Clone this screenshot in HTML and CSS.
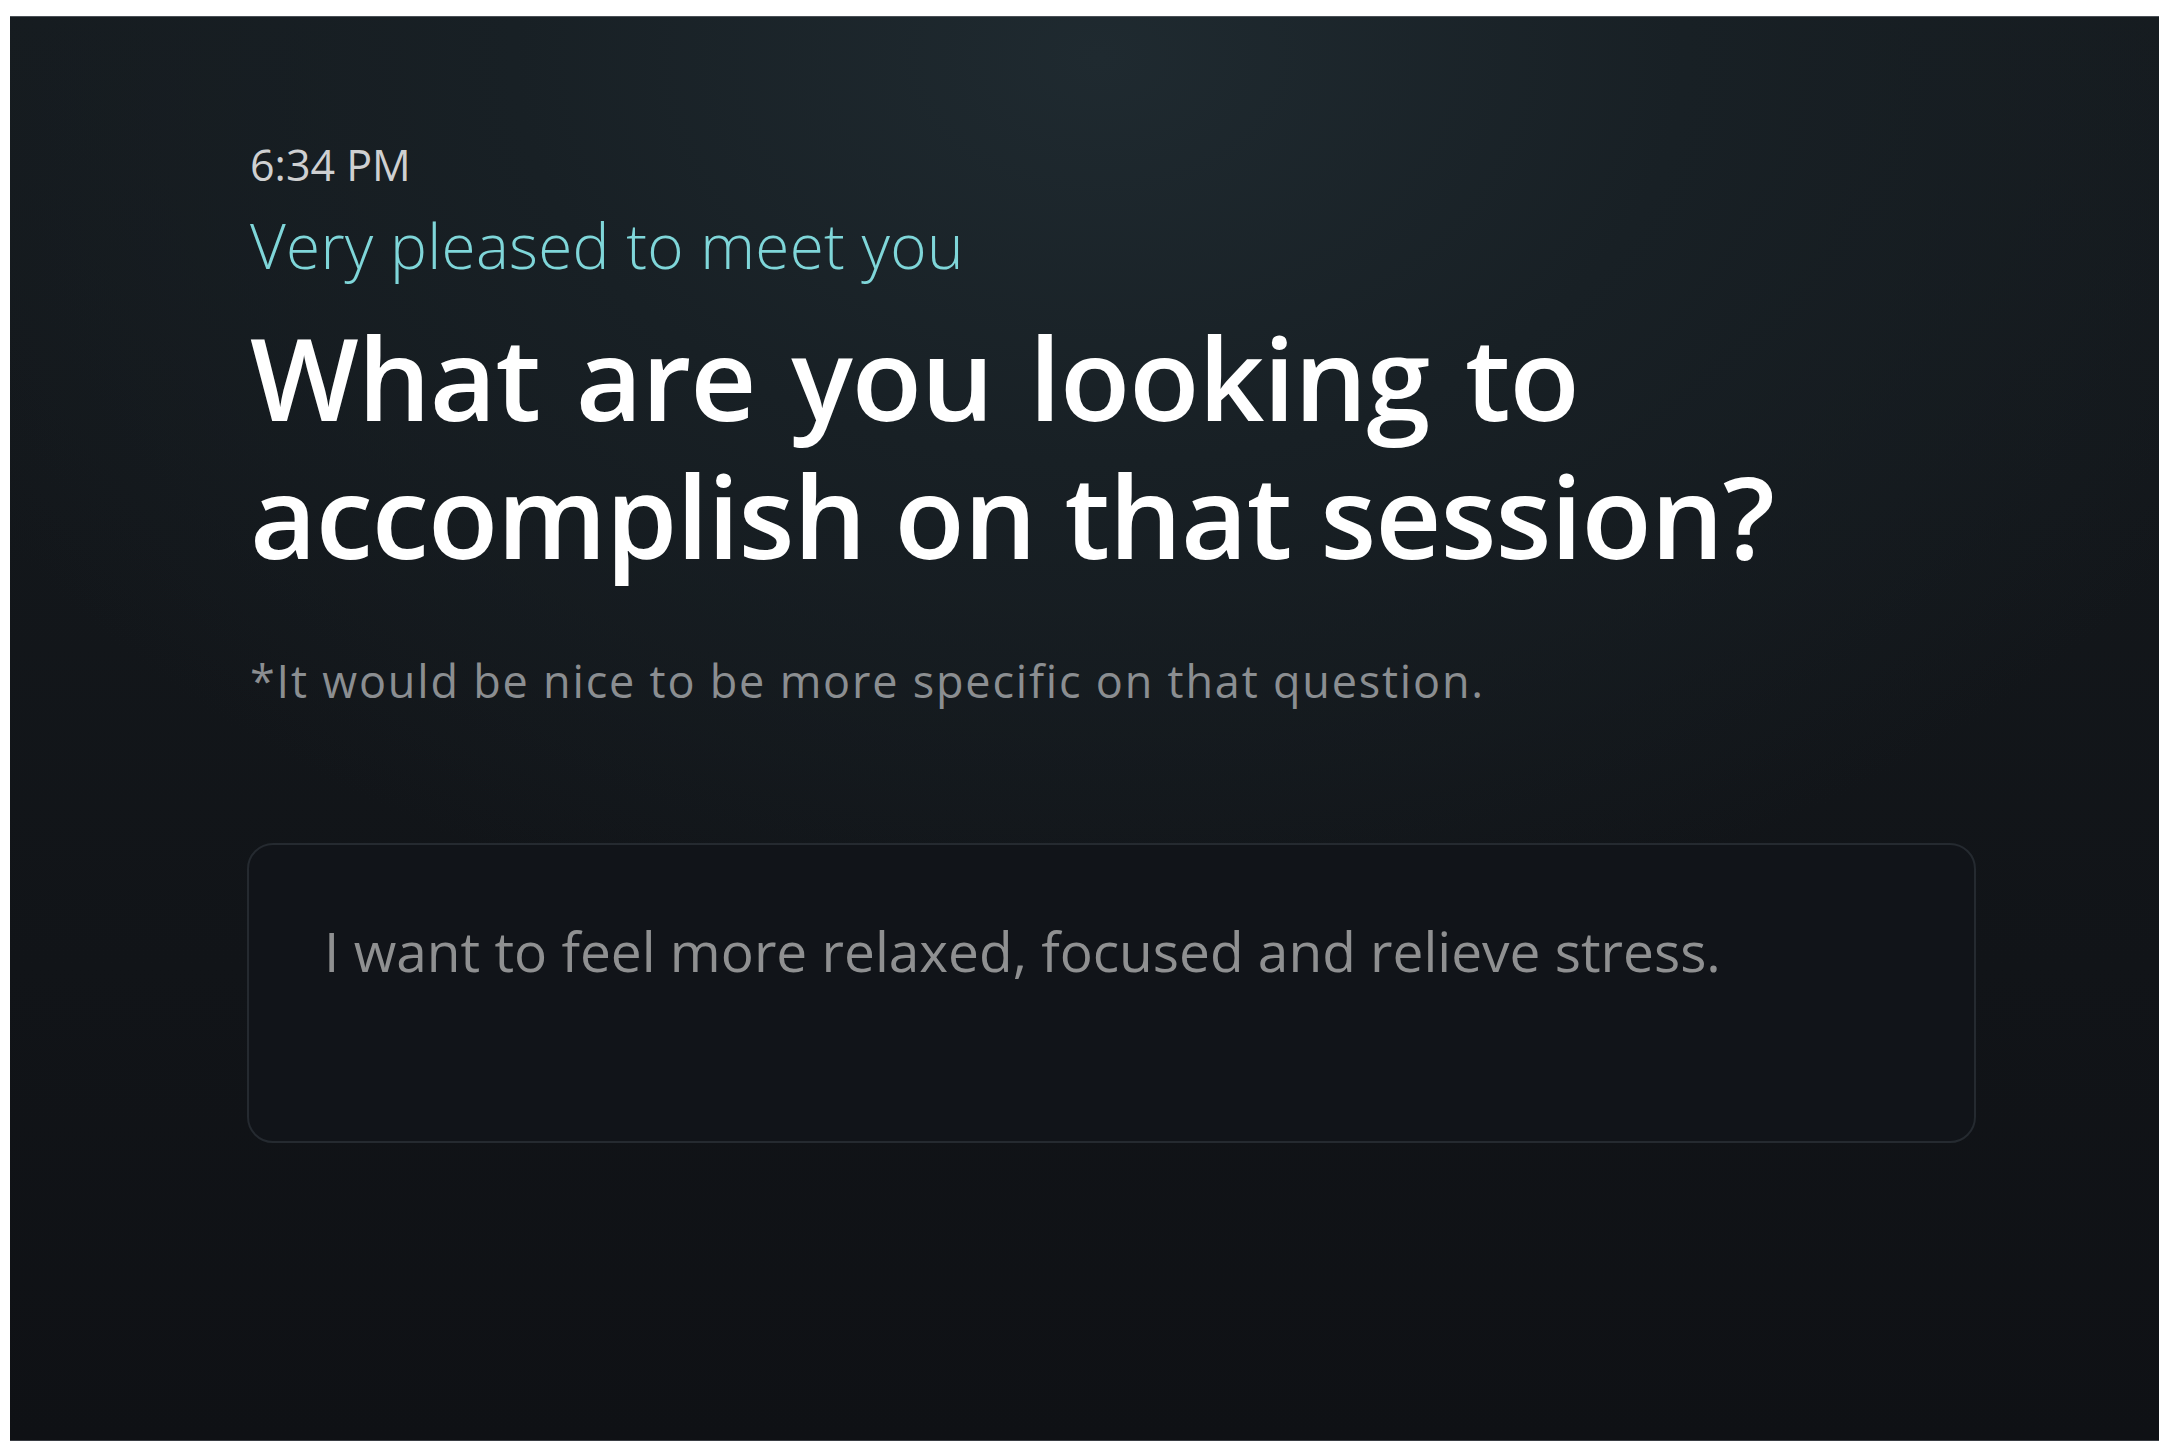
FILE: index.html
```html
<!DOCTYPE html>
<html lang="en">
<head>
<meta charset="utf-8">
<title>Session goal</title>
<link rel="stylesheet" href="styles.css">
</head>
<body>
<main class="panel">
  <section class="content">
    <p class="time">6:34 PM</p>
    <p class="greeting">Very pleased to meet you</p>
    <h1 class="question"><span class="q-line q-line-first">What are you looking to</span><span class="q-line">accomplish on that session?</span></h1>
    <p class="hint">*It would be nice to be more specific on that question.</p>
    <div class="answer">
      <p class="answer-text">I want to feel more relaxed, focused and relieve stress.</p>
    </div>
  </section>
</main>
</body>
</html>
```
FILE: styles.css
```css
html, body {
  margin: 0;
  padding: 0;
  background: #ffffff;
}

body {
  padding: 16px 10px 11px 10px;
  font-family: "Open Sans", "Noto Sans", sans-serif;
}

.panel {
  height: 1425px;
  box-sizing: border-box;
  border-top: 1px solid #4a5056;
  border-bottom: 1px solid #3a3e44;
  background:
    radial-gradient(ellipse 1300px 900px at 1090px 40px, #1f2a30 0%, #182025 45%, rgba(16, 19, 24, 0) 100%),
    linear-gradient(180deg, #151a1e 0%, #0f1115 100%);
  padding: 123px 0 0 240px;
}

.content {
  display: flex;
  flex-direction: column;
  align-items: flex-start;
}

.time {
  margin: 0;
  font-size: 43px;
  line-height: 50px;
  color: #cfd0d1;
  font-weight: 400;
}

.greeting {
  margin: 19px 0 0 0;
  font-size: 62px;
  line-height: 72px;
  font-weight: 300;
  color: #7fd6d9;
  letter-spacing: 0.3px;
}

.question {
  margin: 27px 0 0 0;
  font-size: 115px;
  line-height: 138px;
  font-weight: 600;
  color: #ffffff;
  letter-spacing: -1px;
}

.q-line {
  display: block;
}

.q-line-first {
  word-spacing: 7px;
}

.hint {
  margin: 71px 0 0 0;
  font-size: 45px;
  line-height: 52px;
  color: #8b8e91;
  font-weight: 400;
  letter-spacing: 1.8px;
}

.answer {
  margin: 136px 0 0 -3px;
  width: 1729px;
  height: 300px;
  box-sizing: border-box;
  border: 2px solid #252a30;
  border-radius: 26px;
  background: #111419;
  padding: 73px 0 0 75px;
}

.answer-text {
  margin: 0;
  font-size: 55px;
  line-height: 66px;
  color: #8f9091;
}
```
